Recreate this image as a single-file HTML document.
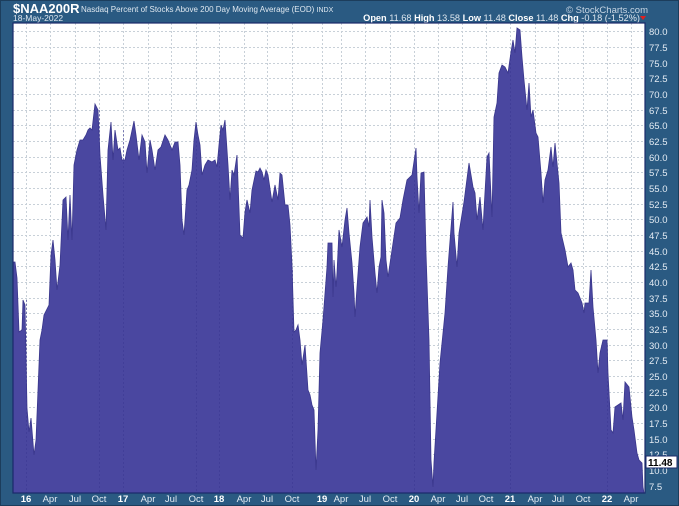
<!DOCTYPE html>
<html><head><style>
html,body{margin:0;padding:0;background:#2a5a82;}
svg{display:block;font-family:"Liberation Sans",sans-serif;}
</style></head><body>
<svg width="679" height="506" viewBox="0 0 679 506" xmlns="http://www.w3.org/2000/svg">
<rect x="0" y="0" width="679" height="506" fill="#2a5a82"/>
<rect x="0.5" y="0.5" width="678" height="505" fill="none" stroke="#1c3d5c"/>
<text x="13" y="13" font-size="13" font-weight="bold" fill="#fff">$NAA200R</text>
<text x="81" y="12" font-size="8" fill="#dfe8f0">Nasdaq Percent of Stocks Above 200 Day Moving Average (EOD)  <tspan font-size="7">INDX</tspan></text>
<text x="13" y="21" font-size="8.5" fill="#dfe8f0">18-May-2022</text>
<text x="648" y="13" font-size="9.5" fill="#c8d6e4" text-anchor="end">© StockCharts.com</text>
<text x="640" y="21" font-size="9.2" fill="#dfe8f0" text-anchor="end"><tspan font-weight="bold" fill="#fff">Open</tspan> 11.68 <tspan font-weight="bold" fill="#fff">High</tspan> 13.58 <tspan font-weight="bold" fill="#fff">Low</tspan> 11.48 <tspan font-weight="bold" fill="#fff">Close</tspan> 11.48 <tspan font-weight="bold" fill="#fff">Chg</tspan> -0.18 (-1.52%)</text>
<polygon points="640,16 646,16 643,20" fill="#e02020"/>
<rect x="13" y="23" width="632" height="470" fill="#fff"/>
<g stroke="#c8d0d8" stroke-width="1" stroke-dasharray="2,2">
<line x1="13" y1="31.5" x2="645" y2="31.5"/><line x1="13" y1="47.5" x2="645" y2="47.5"/><line x1="13" y1="63.5" x2="645" y2="63.5"/><line x1="13" y1="78.5" x2="645" y2="78.5"/><line x1="13" y1="94.5" x2="645" y2="94.5"/><line x1="13" y1="110.5" x2="645" y2="110.5"/><line x1="13" y1="125.5" x2="645" y2="125.5"/><line x1="13" y1="141.5" x2="645" y2="141.5"/><line x1="13" y1="157.5" x2="645" y2="157.5"/><line x1="13" y1="172.5" x2="645" y2="172.5"/><line x1="13" y1="188.5" x2="645" y2="188.5"/><line x1="13" y1="204.5" x2="645" y2="204.5"/><line x1="13" y1="219.5" x2="645" y2="219.5"/><line x1="13" y1="235.5" x2="645" y2="235.5"/><line x1="13" y1="251.5" x2="645" y2="251.5"/><line x1="13" y1="266.5" x2="645" y2="266.5"/><line x1="13" y1="282.5" x2="645" y2="282.5"/><line x1="13" y1="298.5" x2="645" y2="298.5"/><line x1="13" y1="313.5" x2="645" y2="313.5"/><line x1="13" y1="329.5" x2="645" y2="329.5"/><line x1="13" y1="345.5" x2="645" y2="345.5"/><line x1="13" y1="360.5" x2="645" y2="360.5"/><line x1="13" y1="376.5" x2="645" y2="376.5"/><line x1="13" y1="392.5" x2="645" y2="392.5"/><line x1="13" y1="407.5" x2="645" y2="407.5"/><line x1="13" y1="423.5" x2="645" y2="423.5"/><line x1="13" y1="439.5" x2="645" y2="439.5"/><line x1="13" y1="454.5" x2="645" y2="454.5"/><line x1="13" y1="470.5" x2="645" y2="470.5"/>
<line x1="26.5" y1="23" x2="26.5" y2="493"/><line x1="50.5" y1="23" x2="50.5" y2="493"/><line x1="75.5" y1="23" x2="75.5" y2="493"/><line x1="99.5" y1="23" x2="99.5" y2="493"/><line x1="123.5" y1="23" x2="123.5" y2="493"/><line x1="148.5" y1="23" x2="148.5" y2="493"/><line x1="171.5" y1="23" x2="171.5" y2="493"/><line x1="196.5" y1="23" x2="196.5" y2="493"/><line x1="219.5" y1="23" x2="219.5" y2="493"/><line x1="244.5" y1="23" x2="244.5" y2="493"/><line x1="267.5" y1="23" x2="267.5" y2="493"/><line x1="292.5" y1="23" x2="292.5" y2="493"/><line x1="322.5" y1="23" x2="322.5" y2="493"/><line x1="341.5" y1="23" x2="341.5" y2="493"/><line x1="365.5" y1="23" x2="365.5" y2="493"/><line x1="390.5" y1="23" x2="390.5" y2="493"/><line x1="414.5" y1="23" x2="414.5" y2="493"/><line x1="438.5" y1="23" x2="438.5" y2="493"/><line x1="462.5" y1="23" x2="462.5" y2="493"/><line x1="486.5" y1="23" x2="486.5" y2="493"/><line x1="510.5" y1="23" x2="510.5" y2="493"/><line x1="535.5" y1="23" x2="535.5" y2="493"/><line x1="558.5" y1="23" x2="558.5" y2="493"/><line x1="583.5" y1="23" x2="583.5" y2="493"/><line x1="607.5" y1="23" x2="607.5" y2="493"/><line x1="631.5" y1="23" x2="631.5" y2="493"/>
</g>
<polygon fill="#4a47a0" stroke="#3a378c" stroke-width="0.8" points="13,493 13,262 15,262 17,278 19,332 22,330 23,300 25,305 27,408 29,432 31,418 34,455 36,440 38,390 40,340 42,330 44,315 49,305 51,255 53,240 55,260 57,290 60,265 63,200 66,197 68,240 70,195 72,240 74,165 77,150 80,140 83,140 86,135 88,130 90,128 92,130 95,104 98,110 100,155 103,195 106,230 108,150 111,122 113,160 115,130 118,150 120,148 122,160 125,160 127,150 130,140 134,121 136,135 139,160 142,135 145,142 147,173 150,140 152,150 155,170 158,150 161,147 165,135 168,140 172,150 175,142 178,142 180,165 182,220 184,235 187,190 189,185 192,170 194,140 196,122 198,135 200,145 202,175 205,165 208,160 212,162 215,160 217,167 219,145 221,125 223,130 225,120 228,165 230,200 232,170 234,175 237,155 240,235 243,238 245,212 247,200 250,213 252,190 256,171 258,172 260,168 262,172 264,180 266,170 268,175 272,202 275,185 278,200 280,173 282,175 285,205 288,205 290,225 292,265 294,332 296,330 298,325 300,340 302,365 305,345 308,390 310,395 312,405 314,410 316,470 318,430 320,353 323,320 327,267 328,243 332,243 333,297 334,260 336,287 337,273 339,230 342,247 345,220 347,208 349,233 352,263 354,293 355,317 357,287 360,247 363,223 367,217 369,227 370,200 372,237 375,273 377,293 379,267 381,257 382,200 384,213 386,260 388,277 392,250 396,223 400,218 403,200 407,180 412,175 416,148 417,177 419,213 421,173 424,172 426,253 429,340 431,460 433,487 434,462 437,413 440,363 445,313 448,267 453,202 454,233 457,267 459,233 464,202 469,163 473,187 475,193 477,220 480,197 483,230 484,210 487,157 489,153 492,217 494,117 497,103 499,73 502,65 505,67 508,73 511,52 513,40 515,53 517,28 520,30 522,57 524,80 527,110 529,83 531,117 533,110 536,133 538,137 541,173 543,203 545,180 548,170 551,147 553,167 555,143 557,163 559,183 561,233 565,250 568,267 571,263 573,270 575,290 578,293 582,303 584,313 585,303 589,303 591,270 593,307 596,340 598,373 600,353 603,340 607,340 608,373 611,430 613,433 615,407 618,405 621,403 623,420 625,382 629,387 632,417 634,430 637,453 639,460 642,463 643,487 644,493"/>
<g stroke="#3c3994" stroke-width="1" stroke-dasharray="2,2" opacity="0.6">
<line x1="26.5" y1="300" x2="26.5" y2="493"/><line x1="99.5" y1="110" x2="99.5" y2="493"/><line x1="123.5" y1="130" x2="123.5" y2="493"/><line x1="196.5" y1="125" x2="196.5" y2="493"/><line x1="219.5" y1="150" x2="219.5" y2="493"/><line x1="292.5" y1="270" x2="292.5" y2="493"/><line x1="414.5" y1="180" x2="414.5" y2="493"/><line x1="510.5" y1="55" x2="510.5" y2="493"/><line x1="607.5" y1="345" x2="607.5" y2="493"/>
</g>
<rect x="13" y="23" width="632" height="470" fill="none" stroke="#1a2a6a" stroke-width="1.2"/>
<g font-size="9.5" fill="#e4ecf4">
<text x="649" y="35">80.0</text><text x="649" y="51">77.5</text><text x="649" y="67">75.0</text><text x="649" y="82">72.5</text><text x="649" y="98">70.0</text><text x="649" y="114">67.5</text><text x="649" y="129">65.0</text><text x="649" y="145">62.5</text><text x="649" y="161">60.0</text><text x="649" y="176">57.5</text><text x="649" y="192">55.0</text><text x="649" y="208">52.5</text><text x="649" y="223">50.0</text><text x="649" y="239">47.5</text><text x="649" y="255">45.0</text><text x="649" y="270">42.5</text><text x="649" y="286">40.0</text><text x="649" y="302">37.5</text><text x="649" y="317">35.0</text><text x="649" y="333">32.5</text><text x="649" y="349">30.0</text><text x="649" y="364">27.5</text><text x="649" y="380">25.0</text><text x="649" y="396">22.5</text><text x="649" y="411">20.0</text><text x="649" y="427">17.5</text><text x="649" y="443">15.0</text><text x="649" y="458">12.5</text><text x="649" y="474">10.0</text><text x="649" y="490">7.5</text>
</g>
<rect x="646" y="456" width="31" height="12" fill="#fff" stroke="#1a2a6a"/>
<text x="648" y="466" font-size="10" font-weight="bold" fill="#000">11.48</text>
<g font-size="9.5" fill="#e4ecf4" text-anchor="middle">
<text x="26" y="502" font-weight="bold" fill="#fff">16</text><text x="50" y="502">Apr</text><text x="75" y="502">Jul</text><text x="99" y="502">Oct</text><text x="123" y="502" font-weight="bold" fill="#fff">17</text><text x="148" y="502">Apr</text><text x="171" y="502">Jul</text><text x="196" y="502">Oct</text><text x="219" y="502" font-weight="bold" fill="#fff">18</text><text x="244" y="502">Apr</text><text x="267" y="502">Jul</text><text x="292" y="502">Oct</text><text x="322" y="502" font-weight="bold" fill="#fff">19</text><text x="341" y="502">Apr</text><text x="365" y="502">Jul</text><text x="390" y="502">Oct</text><text x="414" y="502" font-weight="bold" fill="#fff">20</text><text x="438" y="502">Apr</text><text x="462" y="502">Jul</text><text x="486" y="502">Oct</text><text x="510" y="502" font-weight="bold" fill="#fff">21</text><text x="535" y="502">Apr</text><text x="558" y="502">Jul</text><text x="583" y="502">Oct</text><text x="607" y="502" font-weight="bold" fill="#fff">22</text><text x="631" y="502">Apr</text>
</g>
</svg>
</body></html>
